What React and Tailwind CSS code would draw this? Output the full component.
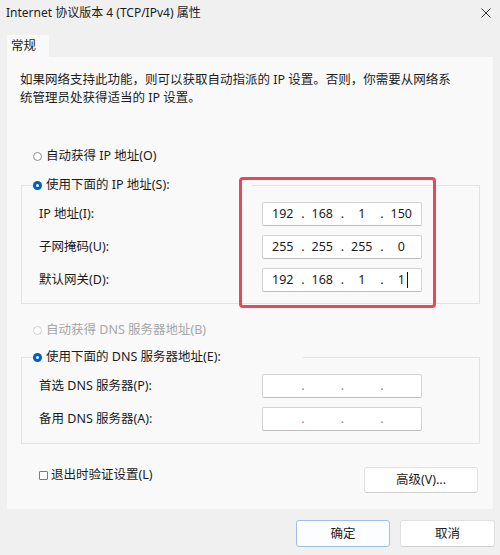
import React from "react";

function Radio({ checked, disabled, children }) {
  return (
    <div className={`flex items-center h-[18px] ${disabled ? "text-[#a6a6a6]" : "text-[#1b1b1b]"}`}>
      {checked ? (
        <span className="w-[9px] h-[9px] rounded-full bg-[#005fb8] flex items-center justify-center">
          <span className="w-[3px] h-[3px] rounded-full bg-white" />
        </span>
      ) : (
        <span className={`w-[9px] h-[9px] rounded-full border ${disabled ? "border-[#d0d0d0]" : "border-[#8f8f8f]"} bg-white`} />
      )}
      <span className="ml-[4px]">{children}</span>
    </div>
  );
}

function IpBox({ parts, cursor, empty }) {
  return (
    <div className="w-[160px] h-[24px] bg-white border border-[#d2d2d2] border-b-[#bdbdbd] rounded-[2px] flex items-center">
      {parts.map((p, i) => (
        <div key={i} className="relative w-[40px] h-full flex items-center justify-center">
          <span className="relative">
            {p}
            {cursor && i === 3 ? (
              <span className="absolute right-[-3px] top-[1px] w-[1px] h-[16px] bg-[#111]" />
            ) : null}
          </span>
          {i < 3 ? (
            <span className={`absolute right-[-2px] ${empty ? "text-[#8a8a8a]" : ""}`}>.</span>
          ) : null}
        </div>
      ))}
    </div>
  );
}

export default function App() {
  return (
    <div className="w-[500px] h-[555px] bg-[#f0f0f0] relative overflow-hidden font-['Noto_Sans','Noto_Sans_CJK_SC',sans-serif] text-[12.5px] text-[#1b1b1b]">
      {/* Title bar */}
      <div className="h-[26px] flex items-center justify-between pl-[6px] pr-[9px]">
        <span className="text-[12px] leading-[16px]">Internet 协议版本 4 (TCP/IPv4) 属性</span>
        <svg width="10" height="10" viewBox="0 0 10 10">
          <path d="M0.5 0.5 L9.5 9.5 M9.5 0.5 L0.5 9.5" stroke="#333" strokeWidth="1" fill="none" />
        </svg>
      </div>

      {/* Tab */}
      <div className="pt-[9px] pl-[7px]">
        <div className="w-[42px] h-[22px] bg-[#f9f9f9] flex items-center pl-[4px] leading-[18px]">常规</div>
      </div>

      {/* Panel */}
      <div className="mx-[7px] h-[452px] bg-[#f9f9f9] relative">
        <div className="pl-[13px] pt-[14px] leading-[18px]">
          <div>如果网络支持此功能，则可以获取自动指派的 IP 设置。否则，你需要从网络系</div>
          <div>统管理员处获得适当的 IP 设置。</div>
        </div>

        <div className="ml-[26px] mt-[40px] leading-[18px]">
          <Radio>自动获得 IP 地址(O)</Radio>
        </div>

        <fieldset className="ml-[14px] mt-[11px] w-[459px] border border-[#e3e3e3] pb-[11px] relative">
          <legend className="ml-[11px] pr-[82px] leading-[18px]">
            <Radio checked>使用下面的 IP 地址(S):</Radio>
          </legend>
          <div className="mt-[8px] grid grid-cols-[223px_160px] gap-y-[9px] pl-[17px] items-center leading-[18px]">
            <div>IP 地址(I):</div>
            <IpBox parts={["192", "168", "1", "150"]} />
            <div>子网掩码(U):</div>
            <IpBox parts={["255", "255", "255", "0"]} />
            <div>默认网关(D):</div>
            <IpBox parts={["192", "168", "1", "1"]} cursor />
          </div>
        </fieldset>

        <div className="ml-[26px] mt-[17px] leading-[18px]">
          <Radio disabled>自动获得 DNS 服务器地址(B)</Radio>
        </div>

        <fieldset className="ml-[14px] mt-[9px] w-[459px] border border-[#e3e3e3] pb-[12px]">
          <legend className="ml-[11px] pr-[82px] leading-[18px]">
            <Radio checked>使用下面的 DNS 服务器地址(E):</Radio>
          </legend>
          <div className="mt-[8px] grid grid-cols-[223px_160px] gap-y-[9px] pl-[17px] items-center leading-[18px]">
            <div>首选 DNS 服务器(P):</div>
            <IpBox parts={["", "", "", ""]} empty />
            <div>备用 DNS 服务器(A):</div>
            <IpBox parts={["", "", "", ""]} empty />
          </div>
        </fieldset>

        <div className="mt-[23px] pl-[32px] pr-[15px] flex justify-between items-start">
          <div className="flex items-center h-[18px] mt-[-1px] leading-[18px]">
            <span className="w-[9px] h-[9px] border border-[#7a7a7a] rounded-[1px] bg-white" />
            <span className="ml-[3px]">退出时验证设置(L)</span>
          </div>
          <div className="w-[114px] h-[26px] bg-white border border-[#e2e2e2] border-b-[#cfcfcf] rounded-[3px] flex items-center justify-center leading-[18px]">
            高级(V)...
          </div>
        </div>

        {/* highlight */}
        <div className="absolute left-[232px] top-[120px] w-[197px] h-[131px] border-[3px] border-[#e8495a] rounded-[4px]" />
      </div>

      {/* Bottom buttons */}
      <div className="mt-[11px] pr-[5px] flex justify-end gap-[10px] leading-[18px]">
        <div className="w-[94px] h-[27px] bg-[#fbfdff] border border-[#9cc1e3] rounded-[3px] flex items-center justify-center">确定</div>
        <div className="w-[95px] h-[27px] bg-white border border-[#e0e0e0] border-b-[#cfcfcf] rounded-[3px] flex items-center justify-center">取消</div>
      </div>
    </div>
  );
}
